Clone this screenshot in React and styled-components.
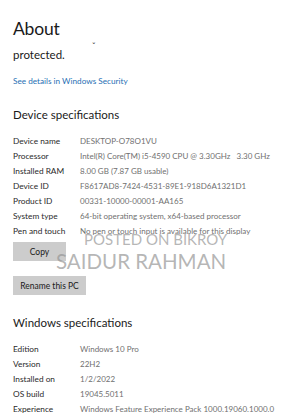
import React from "react";
import styled, { createGlobalStyle } from "styled-components";

const GlobalStyle = createGlobalStyle`
  html, body {
    margin: 0;
    padding: 0;
    background: #fff;
  }
  body {
    font-family: Lato, "Open Sans", sans-serif;
    color: #1a1a1a;
  }
`;

const device = [
  ["Device name", "DESKTOP-O78O1VU"],
  ["Processor", "Intel(R) Core(TM) i5-4590 CPU @ 3.30GHz   3.30 GHz"],
  ["Installed RAM", "8.00 GB (7.87 GB usable)"],
  ["Device ID", "F8617AD8-7424-4531-89E1-918D6A1321D1"],
  ["Product ID", "00331-10000-00001-AA165"],
  ["System type", "64-bit operating system, x64-based processor"],
  ["Pen and touch", "No pen or touch input is available for this display"],
];

const windows = [
  ["Edition", "Windows 10 Pro"],
  ["Version", "22H2"],
  ["Installed on", "1/2/2022"],
  ["OS build", "19045.5011"],
  ["Experience", "Windows Feature Experience Pack 1000.19060.1000.0"],
];

export default function App() {
  return (
    <Page>
      <GlobalStyle />
      <Title>About</Title>
      <Protected>
        protected.
        <Fragment>ˇ</Fragment>
      </Protected>
      <Link>See details in Windows Security</Link>

      <Heading $top={19}>Device specifications</Heading>
      <Specs>
        {device.map(([k, v]) => (
          <Row key={k}>
            <Label>{k}</Label>
            <Value>{v}</Value>
          </Row>
        ))}
      </Specs>

      <Buttons>
        <Button $width={53}>Copy</Button>
        <Button $width={73}>Rename this PC</Button>
        <Watermark $top={-12} $left={71} $size={15}>POSTED ON BIKROY</Watermark>
        <Watermark $top={7} $left={43} $size={20.5}>SAIDUR RAHMAN</Watermark>
      </Buttons>

      <Heading $top={19}>Windows specifications</Heading>
      <Specs>
        {windows.map(([k, v]) => (
          <Row key={k}>
            <Label>{k}</Label>
            <Value>{v}</Value>
          </Row>
        ))}
      </Specs>
    </Page>
  );
}

const Page = styled.div`
  padding: 16px 0 0 13px;
  width: 300px;
  height: 419px;
  box-sizing: border-box;
  overflow: hidden;
`;

const Title = styled.h1`
  margin: 0;
  font-size: 17.5px;
  font-weight: 400;
  line-height: 26px;
  letter-spacing: -0.2px;
`;

const Protected = styled.div`
  position: relative;
  margin-top: 5px;
  font-size: 11.5px;
  line-height: 16px;
`;

const Fragment = styled.span`
  position: absolute;
  left: 79px;
  top: -8px;
  font-size: 9px;
  color: #555;
`;

const Link = styled.div`
  margin-top: 12px;
  font-size: 8.2px;
  line-height: 12px;
  color: #1f6fb4;
`;

const Heading = styled.h2`
  margin: ${({ $top }) => $top}px 0 9px;
  font-size: 11.5px;
  font-weight: 400;
  line-height: 18px;
`;

const Specs = styled.div`
  display: flex;
  flex-direction: column;
`;

const Row = styled.div`
  display: grid;
  grid-template-columns: 67px 1fr;
  height: 15px;
  align-items: center;
  font-size: 8.3px;
  white-space: pre;
`;

const Label = styled.span`
  color: #2a2a2a;
`;

const Value = styled.span`
  color: #707070;
  font-size: 8px;
`;

const Buttons = styled.div`
  position: relative;
  display: flex;
  flex-direction: column;
  align-items: flex-start;
  gap: 15px;
  margin-top: 4px;
`;

const Button = styled.div`
  width: ${({ $width }) => $width}px;
  height: 19px;
  display: flex;
  align-items: center;
  justify-content: center;
  background: #cccccc;
  font-size: 8.5px;
  color: #1a1a1a;
`;

const Watermark = styled.span`
  position: absolute;
  top: ${({ $top }) => $top}px;
  left: ${({ $left }) => $left}px;
  font-size: ${({ $size }) => $size}px;
  color: rgba(150, 150, 150, 0.7);
  white-space: nowrap;
  pointer-events: none;
`;
